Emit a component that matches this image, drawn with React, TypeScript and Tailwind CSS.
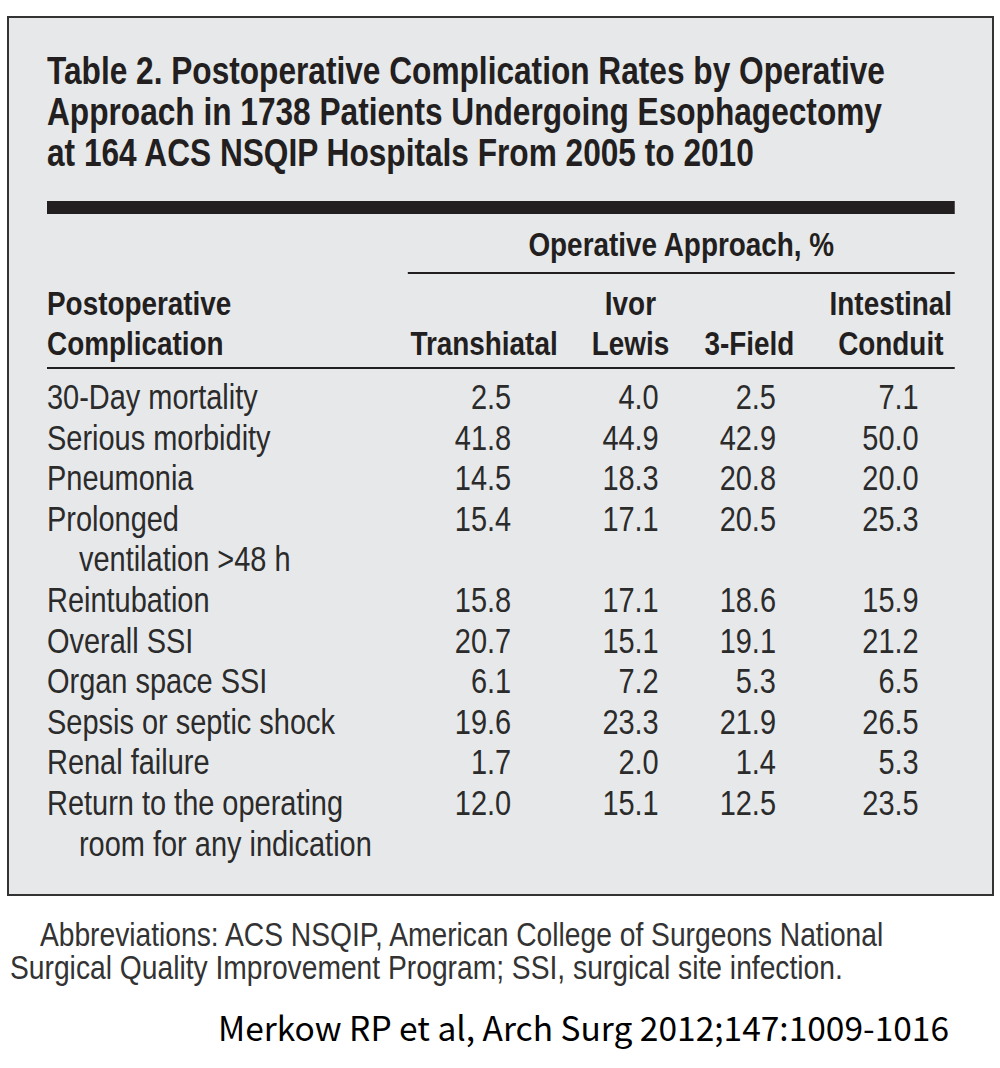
// Arial-metric face squeezed to 82% so it reads like Helvetica Condensed
const sans = "font-['Liberation_Sans',Arial,sans-serif]";

const rows: { label: string[]; values: string[] }[] = [
  { label: ['30-Day mortality'], values: ['2.5', '4.0', '2.5', '7.1'] },
  { label: ['Serious morbidity'], values: ['41.8', '44.9', '42.9', '50.0'] },
  { label: ['Pneumonia'], values: ['14.5', '18.3', '20.8', '20.0'] },
  { label: ['Prolonged', 'ventilation >48 h'], values: ['15.4', '17.1', '20.5', '25.3'] },
  { label: ['Reintubation'], values: ['15.8', '17.1', '18.6', '15.9'] },
  { label: ['Overall SSI'], values: ['20.7', '15.1', '19.1', '21.2'] },
  { label: ['Organ space SSI'], values: ['6.1', '7.2', '5.3', '6.5'] },
  { label: ['Sepsis or septic shock'], values: ['19.6', '23.3', '21.9', '26.5'] },
  { label: ['Renal failure'], values: ['1.7', '2.0', '1.4', '5.3'] },
  { label: ['Return to the operating', 'room for any indication'], values: ['12.0', '15.1', '12.5', '23.5'] },
];

// widths are pre-divided by 0.82 (the horizontal squeeze)
const cols = 'grid grid-cols-[440px_186px_171px_119px_191px]';
const valuePad = ['pr-[60px]', 'pr-[51px]', 'pr-[27px]', 'pr-[44px]'];

export default function App() {
  return (
    <div className="w-[1000px] h-[1068px] bg-white overflow-hidden">
      <div className="ml-[7px] mt-[16px] w-[987px] h-[880px] border-2 border-[#333] bg-[#e7e8ea] pl-[38px] pt-[32px]">
        <div className={`w-[1107px] origin-left scale-x-[0.82] ${sans}`}>
          {/* Title */}
          <h1 className="text-[38.6px] leading-[41px] font-bold text-[#231f20] whitespace-nowrap">
            Table 2. Postoperative Complication Rates by Operative
            <br />
            Approach in 1738 Patients Undergoing Esophagectomy
            <br />
            at 164 ACS NSQIP Hospitals From 2005 to 2010
          </h1>

          <div className="mt-[28px] h-[13px] bg-[#231f20]" />

          {/* Column headers */}
          <div className={`${cols} mt-[10px] text-[34px] font-bold text-[#231f20]`}>
            <div />
            <div className="col-span-4">
              <div className="text-center leading-[41px]">Operative Approach, %</div>
              <div className="mt-[7px] h-[2px] bg-[#231f20]" />
            </div>
          </div>

          <div className={`${cols} items-end mt-[9px] text-[34px] leading-[40px] font-bold text-[#231f20] whitespace-nowrap`}>
            <div>
              Postoperative
              <br />
              Complication
            </div>
            <div className="text-center">Transhiatal</div>
            <div className="text-center">
              Ivor
              <br />
              Lewis
            </div>
            <div className="text-center">3-Field</div>
            <div className="text-center pl-[35px]">
              Intestinal
              <br />
              Conduit
            </div>
          </div>

          <div className="mt-[4px] h-[2px] bg-[#231f20]" />

          {/* Body */}
          <div className="mt-[8px] text-[35.3px] leading-[40.6px] text-[#2b2b2b] whitespace-nowrap">
            {rows.map((row) => (
              <div key={row.label[0]} className={cols}>
                <div>
                  {row.label.map((line, i) => (
                    <div key={line} className={i > 0 ? 'pl-[39px]' : ''}>
                      {line}
                    </div>
                  ))}
                </div>
                {row.values.map((v, i) => (
                  <div key={i} className={`text-right ${valuePad[i]}`}>
                    {v}
                  </div>
                ))}
              </div>
            ))}
          </div>
        </div>
      </div>

      {/* Footnote */}
      <div className="mt-[22px] pl-[10px]">
        <div className={`w-[1200px] origin-left scale-x-[0.83] text-[34px] leading-[33px] text-[#333] whitespace-nowrap ${sans}`}>
          <div className="pl-[36px]">Abbreviations: ACS NSQIP, American College of Surgeons National</div>
          <div>Surgical Quality Improvement Program; SSI, surgical site infection.</div>
        </div>
      </div>

      <div className="mt-[23px] pl-[218px] text-[33.5px] leading-[40px] text-black whitespace-nowrap font-['Noto_Sans_CJK_KR','Noto_Sans',sans-serif]">
        Merkow RP et al, Arch Surg 2012;147:1009-1016
      </div>
    </div>
  );
}
